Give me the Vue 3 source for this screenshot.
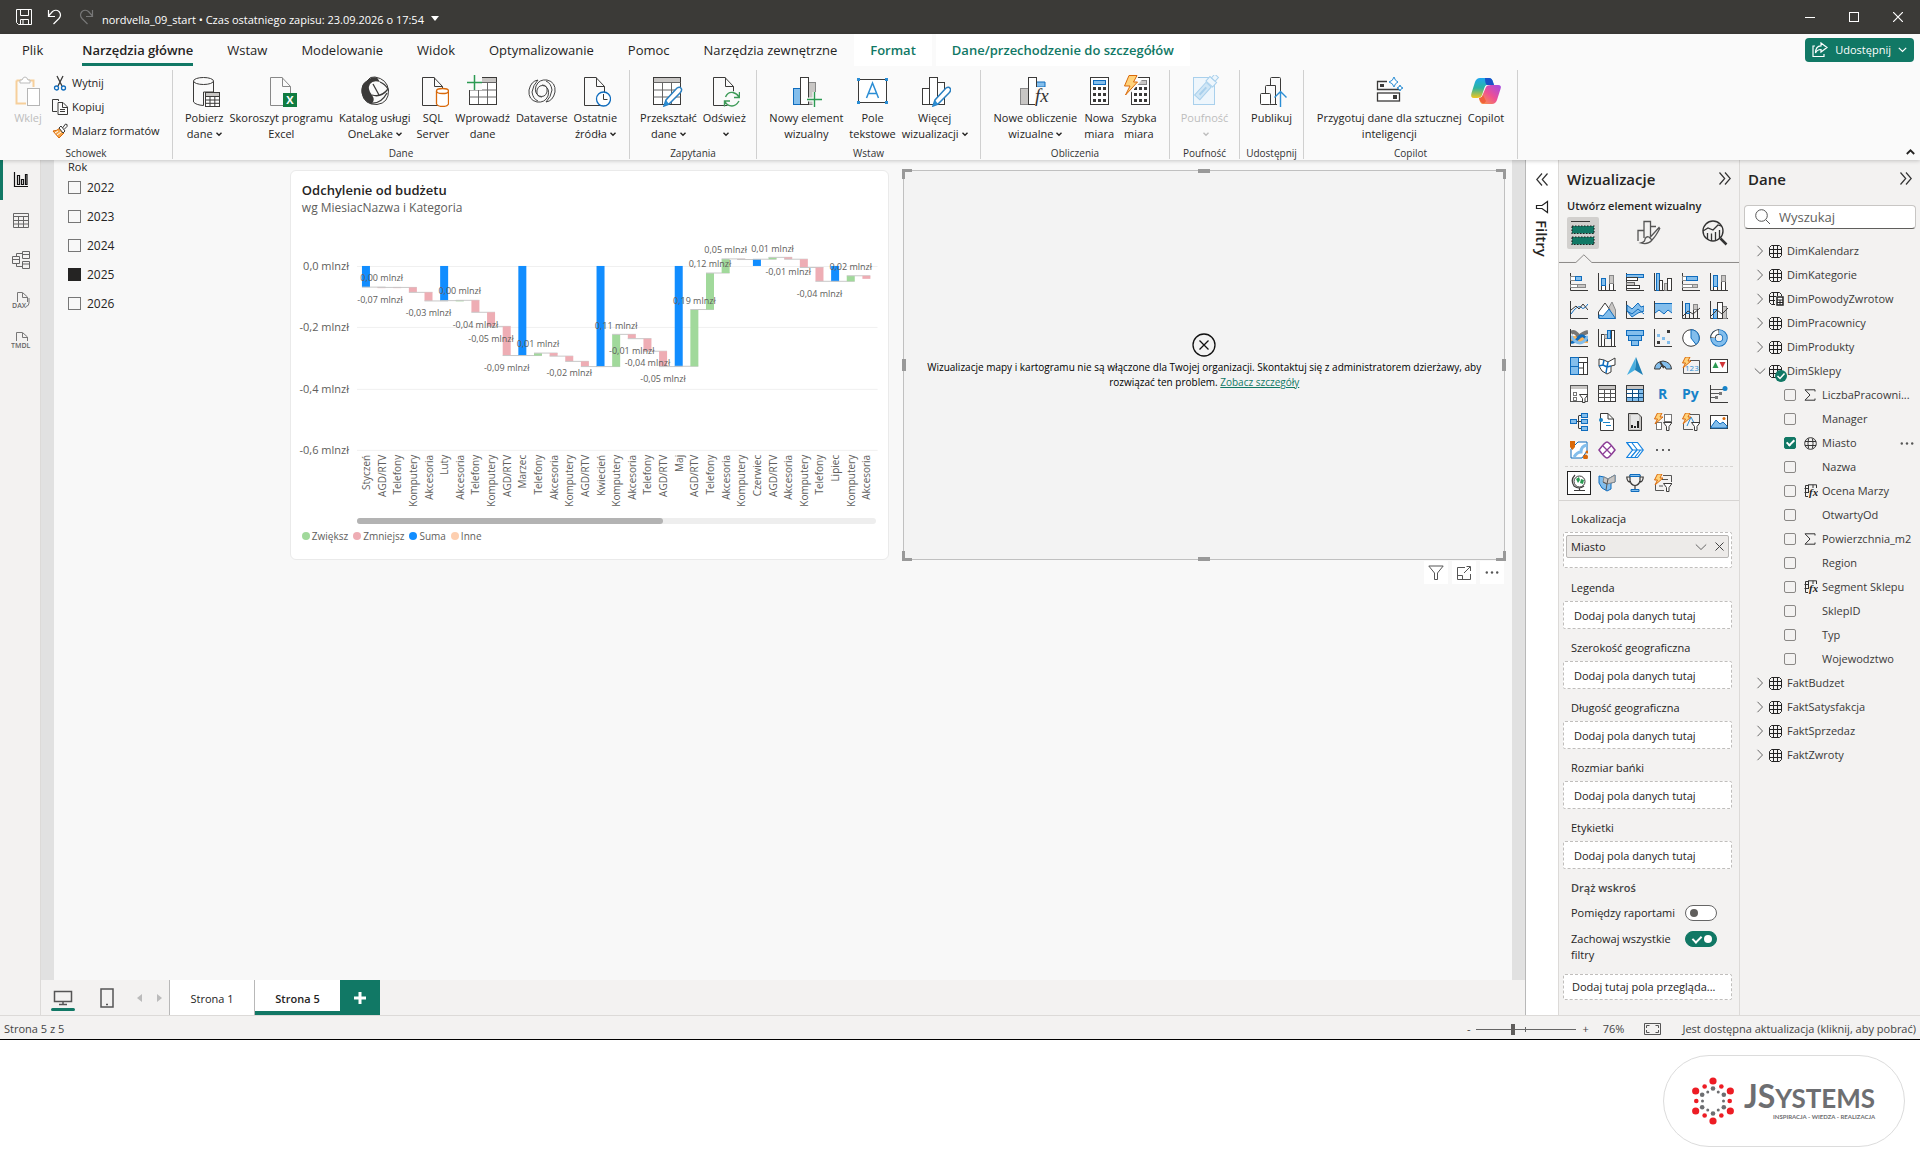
<script setup>
import { h, ref } from 'vue'

const D = '#3b3a39', B = '#0f6cbd', F = '#83beec', G = '#c8c6c4'
const line = (d, c = D, extra = '') => `<path d="${d}" fill="none" stroke="${c}" ${extra}/>`
const box = (x, y, w, hh, f = 'none', c = D, extra = '') => `<rect x="${x}" y="${y}" width="${w}" height="${hh}" fill="${f}" stroke="${c}" ${extra}/>`
const area = (d, f, c = 'none', extra = '') => `<path d="${d}" fill="${f}" stroke="${c}" ${extra}/>`
const axis = line('M.5 0V17.5H18')
const page = (c = D) => area('M5.5 2.5H17L25.5 11.5V30.5H5.5Z', '#fafafa', c) + line('M17.5 2.5V11.5H25.5', c)
const pencil = (x, y) => `<g transform="translate(${x} ${y})">` + area('M1 19L3 13L14 1Q17 -1 18.500 2Q19 4 17 6L6 17Z', '#fff', '#2a7fc0', 'stroke-width="1.500"') + area('M1 19L3 13L6 17Z', '#2a8dd4') + '</g>'
const bolt = area('M3.500 0H8L6 4H9L1 11L3.500 6H.5Z', '#ffd27a', '#d9690a')
const funnel = area('M9.500 9.500H18L15 13.500V17.500H12.500V13.500Z', '#fff', D)

const art = {
  save: [16, 16, line('M.5 .5H15.500V15.500H2.500L.5 13.500ZM4.500 .5V6.500H12.500V.5M4.500 15V10.500H12.500V15M7 11V15', '#fff')],
  undo: [16, 16, line('M1.500 1V7.500H8M1.500 7L5.500 2.500Q9 0 12 2.500Q15 6 12 9.500L6.500 15', '#fff', 'stroke-width="1.200"')],
  redo: [16, 16, line('M14.500 1V7.500H8M14.500 7L10.500 2.500Q7 0 4 2.500Q1 6 4 9.500L9.500 15', '#777', 'stroke-width="1.200"')],
  min: [10, 10, line('M0 5.500H10', '#fff')],
  max: [10, 10, box(.5, .5, 9, 9, 'none', '#fff')],
  close: [10, 10, line('M0 0L10 10M10 0L0 10', '#fff', 'stroke-width="1.200"')],
  share: [16, 16, line('M3 4H1V14.500H12V12M9 1L15 5.500L9 10V7.500Q5 7.500 3.500 11Q3.500 4 9 3.800Z', '#fff', 'stroke-width="1.200"')],
  chev: [9, 6, line('M.8 .8L4.500 4.500L8.200 .8', 'currentColor', 'stroke-width="1.200"')],
  chevUp: [9, 6, line('M.8 5L4.500 1.300L8.200 5', 'currentColor', 'stroke-width="1.800"')],
  chevS: [6, 5, line('M.5 .8L3 3.300L5.500 .8', 'currentColor', 'stroke-width="1.400"')],
  paste: [32, 32, area('M4.500 5.500H21.500V12M14 28.500H4.500V5.500', 'none', '#f6cf9b', 'stroke-width="2"') + area('M8 8V5H10Q11 2 13 2Q15 2 16 5H18V8Z', '#fff', '#bbb') + box(15.500, 13.500, 12, 17, '#fff', '#b5b5b5')],
  cut: [14, 16, line('M4 1L9 11M10 1L5 11', D, 'stroke-width="1.300"') + `<circle cx="3.500" cy="13" r="2" fill="none" stroke="${B}" stroke-width="1.300"/><circle cx="10.500" cy="13" r="2" fill="none" stroke="${B}" stroke-width="1.300"/>`],
  copy: [16, 16, line('M5 12.500H.5V.5H6.500V2M6 3.500H11L15.500 8V15.500H6ZM10.500 4V8.500H15M8 10.500H13M8 12.500H13')],
  brush: [16, 16, area('M8 5L12 10L7 15L1 8Q5 8 8 5Z', '#f5a54a', '#d9690a') + area('M7 5L9 3L13 8L11 10Z', '#fff', D) + line('M10.500 5L13.500 1Q16 1 15 3.500L12 6.500') + line('M3 10L6 8M5 12L9 9', '#fff')],
  getdata: [32, 32, area('M5.500 6V27Q8 30 15.500 30.500V17H25.500V6', '#fafafa', D) + `<ellipse cx="15.500" cy="6" rx="10" ry="3.500" fill="#fafafa" stroke="${D}"/>` + box(17.500, 17.500, 14, 14, '#fff') + area('M18 18H31V21H18Z', G) + line('M17.500 21.500H31.500M17.500 25H31.500M17.500 28.300H31.500M22 21V31M26.800 21V31')],
  excel: [32, 32, page('#888') + '<rect x="18" y="18" width="14" height="14" fill="#107c41"/><text x="25" y="29" font-size="11" font-weight="700" fill="#fff" text-anchor="middle">X</text>'],
  onelake: [32, 32, area('M16 2Q28 4 29.500 15Q30 28 18 29.500Q5 30 3 18Q2 9 8 6Q11 1 16 2Z', '#fafafa', D) + area('M8 6Q12 1 18 2.500L21 7Q14 5 11 9Q8 14 13 20Q17 26 12 29Q3 25 2.500 16Q3 8 8 6Z', D) + line('M14 9L20 20M13 20Q22 23 29 14M12 28Q22 29 28 18M21 7Q26 9 29 14', D, 'stroke-width="1.300"')],
  sql: [32, 32, page() + area('M19.500 16V29Q21 31.500 25.500 31.500Q30 31.500 31.500 29V16', '#fff', '#d9690a', 'stroke-width="1.300"') + '<ellipse cx="25.500" cy="16" rx="6" ry="2.500" fill="#fff" stroke="#d9690a" stroke-width="1.300"/>'],
  enter: [32, 32, box(2.500, 2.500, 27, 27, '#fff') + area('M14 3H29V7H14Z', G) + line('M2.500 7.500H29.500M2.500 15H29.500M2.500 22H29.500M11.500 7V29M20.500 7V29', '#666') + area('M0 0H15V15H0Z', '#fafafa') + line('M7.500 0V15M0 7.500H15', '#2b9a52', 'stroke-width="1.500"')],
  dataverse: [32, 32, line('M16 10Q22 10 21 17Q19 23 13 21Q8 18 10 11Q13 4 21 5Q30 7 29 17Q27 26 20 27Q25 22 26 15Q25 8 20 6M16 22Q10 22 11 15Q13 9 19 11Q24 14 22 21Q19 28 11 27Q2 25 3 15Q5 6 12 5Q7 10 6 17Q7 24 12 26', '#444')],
  recent: [32, 32, page() + `<circle cx="24.500" cy="24" r="7" fill="#fff" stroke="${B}" stroke-width="1.300"/>` + line('M24.500 19V24.500H28.500')],
  transform: [32, 32, box(1.500, 2.500, 27, 27, '#fff') + area('M2 3H28V7H2Z', G) + line('M1.500 7.500H28.500M1.500 15H28.500M1.500 22H28.500M10.500 7V29M19.500 7V29', '#666') + pencil(11, 12)],
  refresh: [32, 32, page() + '<circle cx="24" cy="24" r="8" fill="#fafafa"/>' + line('M17.500 22Q20 16.500 25 17.500Q29 18.500 31 22M31.500 17V22.500H26M31 26Q28 31 24 31Q19 31 17 26.500M16.500 31.500V26H22', '#3e9a58', 'stroke-width="1.400"')],
  visual: [32, 32, box(3.500, 13.500, 8, 16, F, B) + box(17.500, 7.500, 8, 22, G, '#888') + box(10.500, 2.500, 8, 27, '#fff') + line('M24.500 17V32M17 24.500H32', '#fafafa', 'stroke-width="4"') + line('M24.500 17V32M17 24.500H32', '#2b9a52', 'stroke-width="1.400"')],
  textbox: [32, 32, box(2.500, 4.500, 28, 23, '#fff', D) + area('M1 3H4V6H1ZM29 3H32V6H29ZM1 26H4V29H1ZM29 26H32V29H29Z', '#2a8dd4') + line('M10.500 23L16.500 8L22.500 23M12.500 18.500H20.500', '#2a8dd4', 'stroke-width="1.500"')],
  more: [32, 32, box(3.500, 13.500, 8, 16, '#fff') + box(17.500, 7.500, 8, 22, '#fff') + box(10.500, 2.500, 8, 27, '#fff') + pencil(13, 12)],
  calc: [32, 32, box(1.500, 13.500, 8, 16, G, '#888') + area('M17 7H26V12H17Z', F, B) + box(9.500, 2.500, 8, 27, '#fff') + area('M16 12H30V32H16Z', '#fafafa') + '<text x="16" y="27" font-size="19" font-style="italic" font-family="Liberation Serif, serif" fill="#333">fx</text>'],
  measure: [32, 32, box(7.500, 2.500, 18, 27, '#fff') + box(10.500, 5.500, 12, 4, F, B) + line('M10 13.500H24M10 19.500H24M10 25.500H24', D, 'stroke-width="3" stroke-dasharray="3 2"')],
  quick: [32, 32, box(8.500, 2.500, 18, 27, '#fff') + box(14.500, 5.500, 9, 4, G, '#888') + line('M11 13.500H25M11 19.500H25M11 25.500H25', D, 'stroke-width="3" stroke-dasharray="3 2"') + area('M6 0H14L10.500 7H14.500L2.500 21L7 11H1.500Z', '#ffd27a', '#fafafa', 'stroke-width="4"') + area('M6 .5H14L10.500 7H14.500L2.500 20L7 11H1.500Z', '#ffd27a', '#d9690a')],
  sens: [32, 32, box(4.500, 2.500, 21, 27, '#eef6fc', '#a9d0ec') + `<g transform="rotate(42 18 13)">` + box(13.500, 9.500, 7, 17, '#cfe6f6', '#a9d0ec') + box(12.500, 2.500, 9, 6, '#eef6fc', '#a9d0ec') + box(14.500, -2.500, 5, 5, '#eef6fc', '#a9d0ec') + line('M17 13V23', '#a9d0ec', 'stroke-width="2"') + '</g>'],
  publish: [32, 32, box(5.500, 18.500, 10, 11, '#fff', D, 'rx="1"') + line('M10.500 18V11.500Q10.500 10.500 11.500 10.500H20.500V29.500M15.500 10V3.500Q15.500 2.500 16.500 2.500H24.500Q25.500 2.500 25.500 3.500V16M15 29.500H22') + line('M25.500 32V17M19.500 22.500L25.500 16.500L31.500 22.500', '#2a8dd4', 'stroke-width="1.400"')],
  prep: [32, 32, line('M14 6.500H4.500V14.500H26.500V11', D, 'stroke-width="1.300"') + box(4.500, 18, 22, 8, '#fff', D, 'stroke-width="1.300"') + area('M7 9H11V12H7ZM20 20H24V24H20Z', D) + area('M21 2Q22 6 25 7Q22 8 21 12Q20 8 16 7Q20 6 21 2ZM27 10Q27.500 12.500 30 13Q27.500 13.500 27 16Q26.500 13.500 24 13Q26.500 12.500 27 10Z', '#fff', '#2a8dd4')],
  copilot: [32, 32, '<defs><linearGradient id="cpa" x1="0" y1="0" x2="0" y2="1"><stop offset="0" stop-color="#1ea7f0"/><stop offset=".5" stop-color="#2bb5a0"/><stop offset="1" stop-color="#f5c51c"/></linearGradient><linearGradient id="cpb" x1="1" y1="0" x2="0" y2="1"><stop offset="0" stop-color="#a34be8"/><stop offset=".5" stop-color="#ee5094"/><stop offset="1" stop-color="#fba23c"/></linearGradient></defs><path d="M10 3H19Q22 3 23 7L24 10H17Q15 10 14 14L12 20Q11 23 7 23H4Q0 23 1.500 18L5 7Q6.500 3 10 3Z" fill="url(#cpa)"/><path d="M15 3H19Q22 3 23 7L24 10H17Q15 9 15 3Z" fill="#1a52c8"/><path d="M22 29H13Q10 29 9 23Q12 23 13 19L16 12Q17 10 21 10H28Q32 10 30.500 14L27 25Q25.500 29 22 29Z" fill="url(#cpb)"/><path d="M9 23Q12 23 13 20L16 26Q15 29 12 28Q10 27 9 23Z" fill="#f0603c"/>'],
  report: [16, 16, line('M1.500 0V14.500H15M4.500 3.500H6.500V12.500H4.500ZM8.500 7.500H10.500V12.500H8.500ZM12.500 2.500H14V12.500H12.500Z', '#111', 'stroke-width="1.200"')],
  table: [16, 16, line('M.5 1.500H15.500V15.500H.5ZM.5 4.500H15.500M.5 8.500H15.500M.5 12H15.500M5.500 4V15M10.500 4V15', '#666')],
  model: [18, 18, line('M10.500 .5H17.500V7.500H10.500ZM10.500 3.500H17.500M.5 5.500H7.500V12.500H.5ZM.5 8.500H7.500M10.500 10.500H17.500V17.500H10.500ZM10.500 13H17.500M4.500 5V2.500H10M4.500 13V15.500H10', '#666')],
  dax: [18, 18, line('M5.500 11V1.500H10.500L15.500 6V11M10.500 2V6.500H15M17 7V12Q17 15 14 15.500', '#777') + '<text x="0" y="17" font-size="7" font-weight="600" fill="#666">DAX</text>'],
  tmdl: [20, 18, line('M5.500 10V1.500H11.500L16.500 6V10M11.500 2V6.500H16', '#777') + '<text x="0" y="17" font-size="7" font-weight="600" fill="#666">TMDL</text>'],
  left2: [13, 13, line('M6 .5L.8 6.500L6 12.500M11.500 .5L6.300 6.500L11.500 12.500', '#333', 'stroke-width="1.200"')],
  right2: [13, 13, line('M1.500 .5L6.700 6.500L1.500 12.500M7 .5L12.200 6.500L7 12.500', '#333', 'stroke-width="1.200"')],
  filterSide: [14, 14, line('M12.500 1.500V12.500L7 8.500H1.500V5.500H7Z', '#222', 'stroke-width="1.200"')],
  build: [24, 26, line('M0 1.500H19') + `<rect x="1" y="6" width="22" height="7.500" fill="#117865" stroke="#222" stroke-width="1.200" stroke-dasharray="1.500 1.500"/><rect x="1" y="17" width="22" height="7.500" fill="#117865" stroke="#222" stroke-width="1.200" stroke-dasharray="1.500 1.500"/>`],
  format: [24, 26, line('M1 21V10.500H7M7 18V1.500H13.500V16M14 6.500H19M22.500 7L12.500 18M12 17L15 20Q11 25 4 23Q8 22 8 19Q9 16 12 17ZM23 8Q19 16 15 20', '#555', 'stroke-width="1.300"')],
  analyze: [26, 26, `<circle cx="11" cy="11" r="10" fill="none" stroke="#333" stroke-width="1.400"/>` + line('M18.500 18.500L24.500 24.500', '#333', 'stroke-width="2.500"') + line('M1 11L6 8L11 10L16 5L19 6M5.500 19V13M9.500 21V13.500M13.500 20V12M17.500 18V10', '#333', 'stroke-width="1.300"')],
  search: [16, 16, `<circle cx="6.500" cy="6.500" r="5.800" fill="none" stroke="#555"/>` + line('M10.800 10.800L15 15', '#555')],
  next: [8, 12, line('M1.500 .8L6.500 6L1.500 11.200', '#666')],
  down: [12, 8, line('M.8 1.500L6 6.500L11.200 1.500', '#666')],
  tbl: [13, 13, line('M2.500 .5H10.500L12.500 2.500V10.500L10.500 12.500H2.500L.5 10.500V2.500ZM.5 4.500H12.500M.5 8.500H12.500M4.500 .5V12.500M8.500 .5V12.500', '#222')],
  tblCalc: [15, 14, line('M6 12.500H2.500L.5 10.500V2.500L2.500 .5H10.500L12.500 2.500V4M.5 4.500H7M.5 8.500H6M4.500 .5V12.500M8.500 .5V4', '#222') + area('M8 5H14V13H8Z', '#fff', '#222', 'stroke-width="1.500"') + line('M8 8H14M8 10.500H14M11 8V13', '#222')],
  sigma: [12, 12, line('M11 2.500V.8H1L6 6L1 11.200H11V9.500', '#333')],
  globe: [13, 13, line('M6.500 .7A5.800 5.800 0 0 1 6.500 12.300A5.800 5.800 0 0 1 6.500 .7ZM1 4.500H12M1 8.500H12M4.500 1.500Q3.500 6.500 4.500 11.500M8.500 1.500Q9.500 6.500 8.500 11.500', '#333')],
  fx: [14, 14, line('M4 12.500H1.500V1.500H4M.5 4.500H5M.5 8.500H4M4.500 .5V9M4.500 .8H12.500V4M9 .8V4', '#333') + '<text x="5" y="12" font-size="11" font-style="italic" font-weight="700" font-family="Liberation Serif, serif" fill="#222">fx</text>'],
  check: [12, 12, line('M2.500 6L5 8.500L9.500 3.500', '#fff', 'stroke-width="1.500"')],
  desktop: [20, 16, line('M1.500 1.500H18.500V11.500H1.500ZM10 11.500V14.500M6 14.500H14', '#555', 'stroke-width="1.500"')],
  phone: [14, 20, line('M1 1H13V19H1ZM6 16.500H8', '#555', 'stroke-width="1.500"')],
  triL: [5, 8, area('M5 0V8L0 4Z', '#bbb')],
  triR: [5, 8, area('M0 0V8L5 4Z', '#bbb')],
  plus: [12, 12, line('M6 0V12M0 6H12', '#fff', 'stroke-width="3"')],
  fit: [17, 12, line('M.5 .5H16.500V11.500H.5Z', '#555') + line('M5.500 2.500H2.500V5M2.500 7V9.500H5.500M11.500 2.500H14.500V5M14.500 7V9.500H11.500', '#555')],
  error: [24, 24, `<circle cx="12" cy="12" r="11" fill="none" stroke="#111" stroke-width="1.300"/>` + line('M7.500 7.500L16.500 16.500M16.500 7.500L7.500 16.500', '#111', 'stroke-width="1.300"')],
  funnel: [16, 16, line('M.8 1H15.200L9.500 8V14.500H6.500V8Z', '#555')],
  focus: [14, 14, line('M8 1.500H.5V13.500H13.500V8M.5 9.500H5.500V13.500M7 7L13 1M9.500 .5H13.500V5', '#555')],
  dots: [14, 3, '<circle cx="1.800" cy="1.500" r="1.200" fill="#555"/><circle cx="7" cy="1.500" r="1.200" fill="#555"/><circle cx="12.200" cy="1.500" r="1.200" fill="#555"/>'],
  x: [9, 9, line('M.5 .5L8.500 8.500M8.500 .5L.5 8.500', '#444')],

  v0: [18, 18, axis + box(.5, 3.500, 5, 4, '#fff', '#888') + box(5.500, 3.500, 6, 4, F, B) + box(.5, 11.500, 7, 3, '#fff', '#888') + box(7.500, 11.500, 8, 3, G, '#888')],
  v1: [18, 18, axis + box(3.500, 12.500, 4, 5, '#fff') + box(3.500, 5.500, 4, 7, F, B) + box(11.500, 10.500, 4, 7, '#fff') + box(11.500, 2.500, 4, 8, G, '#888')],
  v2: [18, 18, axis + box(.5, 1.500, 17, 3, F, B) + box(.5, 4.500, 11, 3, '#fff') + box(.5, 9.500, 8, 3, G, '#666') + box(.5, 12.500, 13, 3, '#fff')],
  v3: [18, 18, axis + box(2.500, .5, 3, 17, F, B) + box(5.500, 7.500, 3, 10, '#fff') + box(10.500, 10.500, 3, 7, G, '#888') + box(13.500, 5.500, 4, 12, '#fff')],
  v4: [18, 18, axis + box(.5, 3.500, 4, 4, '#fff', '#888') + box(4.500, 3.500, 11, 4, F, B) + box(.5, 11.500, 10, 3, '#fff', '#888') + box(10.500, 11.500, 5, 3, G, '#888')],
  v5: [18, 18, axis + box(3.500, 13.500, 4, 4, '#fff') + box(3.500, 2.500, 4, 11, F, B) + box(11.500, 8.500, 4, 9, '#fff') + box(11.500, 2.500, 4, 6, G, '#888')],
  v6: [18, 18, axis + line('M1 13Q7 4 11 6Q13 10 18 3', B) + line('M1 9L6 5L9 8L13 3L18 9')],
  v7: [18, 18, area('M10 17.500V8L14 1L17.500 9V17.500Z', G, '#888') + area('M.5 17V11L7 2L12 9L5 17Z', '#fff', D) + area('M1 17.500V14L5 15L11 8L17.500 17.500Z', F, B)],
  v8: [18, 18, axis + area('M1 4L6 8L12 2L15 6L18 5V10L12 12L6 16L1 10Z', F, B) + line('M1 10L6 13L12 8L18 13', B)],
  v9: [18, 18, axis + area('M1 2H18V12L14 9L10 13L5 9L1 12Z', F) + line('M1 2.500H18M1 12L5 9L10 13L14 9L18 12', B)],
  v10: [18, 18, axis + box(3.500, 2.500, 4, 10, F, B) + box(11.500, 3.500, 4, 5, G, '#888') + line('M3.500 13V17M7.500 13V17M11.500 9V17M15.500 8V17M1 15L6 10L11 13L18 7')],
  v11: [18, 18, axis + box(3.500, 8.500, 4, 9, F, B) + box(12.500, 5.500, 4, 12, G, '#888') + box(7.500, 1.500, 5, 16, '#fff') + line('M1 15L7 9L12 13L18 7')],
  v12: [18, 18, area('M1 7H18V14H1Z', '#fbb35a') + line('M1 4Q5 1 9 8Q13 4 18 3', '#777', 'stroke-width="4"') + line('M1 13Q5 14 9 8Q13 4 18 12', B, 'stroke-width="3"') + line('M1 7Q5 14 10 14Q14 14 18 7', F, 'stroke-width="3"') + axis],
  v13: [18, 18, axis + box(3.500, 5.500, 3, 12, '#fff') + box(6.500, 5.500, 3, 4, G, '#888') + box(9.500, 1.500, 3, 8, F, B) + box(13.500, 1.500, 3, 16, '#fff')],
  v14: [18, 18, box(.5, 1.500, 17, 5, F, B) + box(2.500, 6.500, 13, 5, F, B) + box(5.500, 11.500, 7, 5, F, B)],
  v15: [18, 18, line('M.5 0V17.500H18') + area('M3 5H6V8H3ZM8 8H11V11H8ZM13 12H16V15H13Z', F) + area('M13 1H16V4H13ZM3 12H6V15H3Z', D)],
  v16: [18, 18, `<circle cx="9" cy="9" r="8.300" fill="#fff" stroke="${D}"/>` + area('M9 .7A8.300 8.300 0 0 1 14 15.500L9 9Z', F, B)],
  v17: [18, 18, `<circle cx="9" cy="9" r="6" fill="none" stroke="${B}" stroke-width="5.500"/><circle cx="9" cy="9" r="6" fill="none" stroke="${F}" stroke-width="3.800"/><path d="M3 9A6 6 0 0 1 9 3" fill="none" stroke="${D}" stroke-width="5.500"/><path d="M3 8.500A6 6 0 0 1 8.500 3" fill="none" stroke="#fff" stroke-width="3.800"/>`],
  v18: [18, 18, box(.5, .5, 17, 17, '#fff') + area('M.5 .5H8.500V17.500H.5Z', F, B) + line('M.5 9.500H8.500', B) + line('M8.500 5.500H17.500M13.500 5V17.500M9 11H13')],
  v19: [18, 18, area('M1 2L6 3L10 5L17 1V8L13 9V15L9 17L4 14L1 9Z', '#fff', D) + line('M6 3L5 8L1 9M5 8L9 10L8 16M9 10L13 9M10 5L9 10', B, 'stroke-width="1.500"')],
  v20: [18, 18, area('M10 0L17 18L9 13Z', '#1d7fb5') + area('M10 0L1 18L9 13Z', '#46aee0')],
  v21: [18, 18, area('M.5 12Q1 5 9 4Q17 5 17.500 12H12Q12 9 9 9Q6 9 6 12Z', F, D) + line('M6 5L10 11', D, 'stroke-width="2"')],
  v22: [18, 18, line('M8 3.500H17.500V16.500H1.500V11', '#555') + '<text x="3" y="14" font-size="8" fill="#2a8dd4">123</text>' + bolt],
  v23: [18, 18, box(.5, 2.500, 17, 13, '#fff') + area('M2.500 11L5.500 5L8.500 11Z', '#2b9a52') + area('M9.500 5H15.500L12.500 11Z', '#d13438')],
  v24: [18, 18, box(.5, .5, 17, 16, '#fff', '#555') + area('M1 1H17V4H1Z', G) + box(3.500, 7.500, 3, 3, '#fff', '#777') + box(3.500, 12.500, 3, 3, '#fff', '#777') + funnel],
  v25: [18, 18, box(.5, .5, 17, 16, '#fff') + area('M1 1H17V4H1Z', G) + line('M.5 4.500H17.500M.5 8.500H17.500M.5 12.500H17.500M6.500 4V16M12.500 4V16', '#555')],
  v26: [18, 18, box(.5, .5, 17, 16, '#fff') + area('M1 1H17V4H1Z', G) + area('M12 5H17V16H1V12H12Z', F) + line('M.5 4.500H17.500M.5 8.500H17.500M.5 12.500H17.500M6.500 4V16M12.500 4V16', '#0f4f86')],
  v27: [18, 18, '<text x="4" y="14" font-size="14" font-weight="700" fill="#1683c9">R</text>'],
  v28: [20, 18, '<text x="1" y="14" font-size="14" font-weight="700" fill="#1683c9">Py</text>'],
  v29: [18, 18, axis + line('M1 4.500H13M1 8.500H9M1 12.500H5', '#555') + `<circle cx="15" cy="3.500" r="2.500" fill="#1683c9"/>` + area('M9 7H12V10H9ZM5 11H8V14H5Z', '#777')],
  v30: [18, 18, line('M6 8.500H11M9 2.500H11M9 15.500H11M8.500 2.500V15.500') + box(.5, 6.500, 6, 4, F, B) + box(11.500, .5, 6, 4, F, B) + box(11.500, 6.500, 6, 4, F, B) + box(11.500, 13.500, 6, 4, F, B)],
  v31: [18, 18, area('M2.500 .5H10L15.500 6V17.500H2.500Z', '#fff', D) + line('M10 .5V6H15.500') + `<circle cx="3" cy="7" r="2" fill="#1683c9"/>` + line('M5 9.500H12M8 12.500H13', '#1683c9')],
  v32: [18, 18, area('M2.500 .5H12L15.500 4V17.500H2.500Z', G, D) + area('M5 2H13V16H5Z', '#e6e6e6') + area('M5 12H7V15H5ZM8 13H10V15H8ZM11 8H13V15H11Z', '#222')],
  v33: [18, 18, box(2.500, 9.500, 5, 7, '#fff', '#777') + box(10.500, 1.500, 7, 7, '#fff', '#777') + funnel + bolt],
  v34: [18, 18, line('M8 1.500H17.500V9M1.500 11V16.500H11', '#555') + line('M5 13L9 4L12 10', '#2a8dd4') + funnel + bolt],
  v35: [18, 18, box(.5, 2.500, 17, 13, '#fff') + area('M1 14L6 7L10 11L13 9L17 13V15H1Z', F, B) + `<circle cx="14" cy="5.500" r="1.500" fill="#d9690a"/>`],
  v36: [18, 18, area('M8 1H17V10L12 17H1V8Z', '#fff', B) + line('M4 16Q7 11 11 11Q11 5 17 4', F, 'stroke-width="3"') + area('M0 0H5V6L2.500 9L0 6Z', '#d9690a') + '<circle cx="15.500" cy="16" r="2.500" fill="#d9690a"/><circle cx="17" cy="11" r="1.500" fill="#d9690a"/>'],
  v37: [18, 18, area('M9 1Q11 1 17 9Q11 17 9 17Q7 17 1 9Q7 1 9 1Z', '#fff', '#8c3d96', 'stroke-width="1.500"') + line('M5 5L13 13M13 5L5 13', '#8c3d96', 'stroke-width="1.300"')],
  v38: [18, 18, area('M.8 1.500H11.500L17.200 9L11.500 16.500H.8L6.500 9Z', '#fff', '#1683e0', 'stroke-width="1.200"') + line('M.8 1.500L6.500 9H17M5 16L11 9M9 16L14.500 9M6 2L11.500 9', '#1683e0', 'stroke-width="1.200"')],
  v39: [18, 18, '<circle cx="3" cy="9" r="1" fill="#333"/><circle cx="9" cy="9" r="1" fill="#333"/><circle cx="15" cy="9" r="1" fill="#333"/>'],
  w0: [18, 18, `<circle cx="9.500" cy="7.500" r="5.500" fill="#fff" stroke="${D}"/>` + area('M6 5L9 3L10 6L8 9ZM11 5L14 6L13 10L10 9Z', '#2b9a52') + line('M5 1Q0 6 4 12Q9 16 14 12M9.500 14V16.500M4 16.500H15', D, 'stroke-width="1.200"')],
  w1: [18, 18, area('M1 2L6 3L10 5L17 1V8L13 9V15L9 17L4 14L1 9Z', F, B) + area('M6 3L10 5L17 1V8L9 10L5 8Z', G, '#888') + line('M5 8L9 10L8 16M10 5L9 10', '#555')],
  w2: [18, 18, line('M4 1V7Q5 11 9 11.500Q13 11 14 7V1M4 3H.8Q.8 8 5 8.500M14 3H17.200Q17.200 8 13 8.500M9 11V15', D, 'stroke-width="1.200"') + area('M4 .5H14V2.500H4ZM5 15.500H13V17.500H5Z', F, B)],
  w3: [18, 18, line('M9 1.500H17.500V8M1.500 11V16.500H10M8 5.500H14M5 12H9', '#555') + funnel + bolt],
}
const Ico = (p) => h('svg', { width: art[p.n][0], height: art[p.n][1], viewBox: `0 0 ${art[p.n][0]} ${art[p.n][1]}`, 'aria-hidden': 'true', innerHTML: art[p.n][2] })
Ico.props = ['n']

const menu = ['Wstaw', 'Modelowanie', 'Widok', 'Optymalizowanie', 'Pomoc', 'Narzędzia zewnętrzne']
const clip = [['cut', 'Wytnij'], ['copy', 'Kopiuj'], ['brush', 'Malarz formatów']]
const groups = [
  { label: 'Dane', cls: 'g-data', items: [['getdata', 'Pobierz', 'dane', 1], ['excel', 'Skoroszyt programu', 'Excel'], ['onelake', 'Katalog usługi', 'OneLake', 1], ['sql', 'SQL', 'Server'], ['enter', 'Wprowadź', 'dane'], ['dataverse', 'Dataverse', ''], ['recent', 'Ostatnie', 'źródła', 1]] },
  { label: 'Zapytania', cls: 'g-query', items: [['transform', 'Przekształć', 'dane', 1], ['refresh', 'Odśwież', '', 1]] },
  { label: 'Wstaw', cls: 'g-insert', items: [['visual', 'Nowy element', 'wizualny'], ['textbox', 'Pole', 'tekstowe'], ['more', 'Więcej', 'wizualizacji', 1]] },
  { label: 'Obliczenia', cls: 'g-calc', items: [['calc', 'Nowe obliczenie', 'wizualne', 1], ['measure', 'Nowa', 'miara'], ['quick', 'Szybka', 'miara']] },
  { label: 'Poufność', cls: 'g-sens', items: [['sens', 'Poufność', '', 1, 1]] },
  { label: 'Udostępnij', cls: 'g-share', items: [['publish', 'Publikuj', '']] },
  { label: 'Copilot', cls: 'g-copilot', items: [['prep', 'Przygotuj dane dla sztucznej', 'inteligencji'], ['copilot', 'Copilot', '']] },
]
const rail = [['report', 'Widok raportu'], ['table', 'Widok tabeli'], ['model', 'Widok modelu'], ['dax', 'Widok zapytań DAX'], ['tmdl', 'Widok TMDL']]
const years = ref([['2022', false], ['2023', false], ['2024', false], ['2025', true], ['2026', false]])

const S = 's', U = 'u', N = 'd'
const rows = [
  ['Styczeń', S, 0, -0.069], ['AGD/RTV', N, -0.069, -0.07], ['Telefony', N, -0.069, -0.07], ['Komputery', N, -0.07, -0.086], ['Akcesoria', N, -0.086, -0.114],
  ['Luty', S, 0, -0.113], ['Akcesoria', U, -0.113, -0.112], ['Telefony', N, -0.112, -0.151], ['Komputery', N, -0.151, -0.197], ['AGD/RTV', N, -0.197, -0.292],
  ['Marzec', S, 0, -0.292], ['Telefony', U, -0.292, -0.284], ['Akcesoria', N, -0.284, -0.294], ['Komputery', N, -0.294, -0.311], ['AGD/RTV', N, -0.311, -0.328],
  ['Kwiecień', S, 0, -0.328], ['Komputery', U, -0.328, -0.223], ['Akcesoria', N, -0.223, -0.237], ['Telefony', N, -0.237, -0.278], ['AGD/RTV', N, -0.278, -0.328],
  ['Maj', S, 0, -0.327], ['AGD/RTV', U, -0.327, -0.142], ['Telefony', U, -0.142, -0.023], ['Akcesoria', U, -0.023, 0.023], ['Komputery', N, 0.023, 0.021],
  ['Czerwiec', S, 0, 0.022], ['AGD/RTV', U, 0.022, 0.028], ['Akcesoria', N, 0.028, 0.022], ['Komputery', N, 0.022, -0.005], ['Telefony', N, -0.005, -0.05],
  ['Lipiec', S, 0, -0.05], ['Komputery', U, -0.05, -0.032], ['Akcesoria', N, -0.032, -0.042],
]
const colors = { s: '#118dff', u: '#a1d99b', d: '#eeadb4' }
const cx = (i) => 75 + i * 15.65
const vy = (v) => 55 - v * 307
const bars = rows.map(([name, k, a, b], i) => ({
  name, fill: colors[k], x: cx(i) - 4, cx: cx(i), y: vy(Math.max(a, b)), h: Math.max(1, Math.abs(a - b) * 307), end: vy(b), last: i === rows.length - 1,
}))
const marks = [[1, 67, '0,00'], [0.9, 89, '-0,07'], [4, 102, '-0,03'], [6, 80, '0,00'], [7, 114, '-0,04'], [8, 128, '-0,05'], [9, 157, '-0,09'], [11, 133, '0,01'], [13, 162, '-0,02'], [16, 115, '0,11'], [17, 140, '-0,01'], [18, 152, '-0,04'], [19, 168, '-0,05'], [21, 90, '0,19'], [22, 53, '0,12'], [23, 39, '0,05'], [26, 38, '0,01'], [27, 61, '-0,01'], [29, 83, '-0,04'], [31, 56, '0,02']]
const ticks = [[55, '0,0'], [116, '-0,2'], [178, '-0,4'], [239, '-0,6']]
const legend = [['Zwiększ', 'up'], ['Zmniejsz', 'dn'], ['Suma', 'sum'], ['Inne', 'oth']]

const vizIcons = Array.from({ length: 40 }, (_, i) => 'v' + i)
const wells = ['Legenda', 'Szerokość geograficzna', 'Długość geograficzna', 'Rozmiar bańki', 'Etykietki']
const tablesTop = ['DimKalendarz', 'DimKategorie', 'DimPowodyZwrotow', 'DimPracownicy', 'DimProdukty']
const tablesEnd = ['FaktBudzet', 'FaktSatysfakcja', 'FaktSprzedaz', 'FaktZwroty']
const fields = ref([
  { n: 'LiczbaPracowni...', i: 'sigma' }, { n: 'Manager' }, { n: 'Miasto', i: 'globe', on: true, more: true }, { n: 'Nazwa' }, { n: 'Ocena Marzy', i: 'fx' }, { n: 'OtwartyOd' },
  { n: 'Powierzchnia_m2', i: 'sigma' }, { n: 'Region' }, { n: 'Segment Sklepu', i: 'fx' }, { n: 'SklepID' }, { n: 'Typ' }, { n: 'Wojewodztwo' },
])
const across = ref(false)
const keep = ref(true)
const zoom = ref(36)
const ring = (start) => Array.from({ length: 6 }, (_, i) => { const a = (i * 60 + start) * Math.PI / 180; return [Math.cos(a), Math.sin(a)] })
const dotsOuter = ring(-90)
const dotsMid = ring(-60)
</script>

<template>
  <div class="shell">
    <header class="titlebar">
      <button class="tb" aria-label="Zapisz"><Ico n="save" /></button>
      <button class="tb" aria-label="Cofnij"><Ico n="undo" /></button>
      <button class="tb" aria-label="Ponów"><Ico n="redo" /></button>
      <button class="doc">nordvella_09_start • Czas ostatniego zapisu: 23.09.2026 o 17:54<i class="caret"></i></button>
      <div class="win">
        <button aria-label="Minimalizuj"><Ico n="min" /></button>
        <button aria-label="Maksymalizuj"><Ico n="max" /></button>
        <button aria-label="Zamknij"><Ico n="close" /></button>
      </div>
    </header>

    <div class="ribbon">
      <nav class="menu">
        <button class="file">Plik</button>
        <button class="home"><span>Narzędzia główne</span></button>
        <button v-for="m in menu" :key="m">{{ m }}</button>
        <button class="ctx">Format</button>
        <button class="ctx">Dane/przechodzenie do szczegółów</button>
        <button class="share"><Ico n="share" />Udostępnij<Ico n="chev" /></button>
      </nav>
      <div class="groups">
        <section class="group g-clip">
          <div class="items">
            <button class="big off"><Ico n="paste" /><span>Wklej</span></button>
            <div class="small">
              <button v-for="c in clip" :key="c[1]"><span class="si"><Ico :n="c[0]" /></span>{{ c[1] }}</button>
            </div>
          </div>
          <div class="glabel">Schowek</div>
        </section>
        <section v-for="g in groups" :key="g.label" class="group" :class="g.cls">
          <div class="items">
            <button v-for="t in g.items" :key="t[0]" class="big" :class="{ off: t[4] }">
              <Ico :n="t[0]" /><span>{{ t[1] }}</span><span>{{ t[2] }}<Ico v-if="t[3]" n="chevS" class="cs" /></span>
            </button>
          </div>
          <div class="glabel">{{ g.label }}</div>
        </section>
        <button class="collapse" aria-label="Zwiń wstążkę"><Ico n="chevUp" /></button>
      </div>
    </div>

    <main class="work">
      <nav class="rail">
        <button v-for="(r, i) in rail" :key="r[0]" :class="{ on: i === 0 }" :aria-label="r[1]"><Ico :n="r[0]" /></button>
      </nav>

      <div class="center">
        <div class="stage">
          <div class="canvas">
            <fieldset class="slicer">
              <legend>Rok</legend>
              <label v-for="y in years" :key="y[0]"><input v-model="y[1]" type="checkbox">{{ y[0] }}</label>
            </fieldset>

            <section class="card">
              <h2>Odchylenie od budżetu</h2>
              <p>wg MiesiacNazwa i Kategoria</p>
              <svg class="plot" viewBox="0 0 598 306">
                <g class="tick">
                  <template v-for="t in ticks" :key="t[1]">
                    <path :d="`M66 ${t[0] + .5}H587`" stroke="#f0f0f0" />
                    <text x="58" :y="t[0] + 4" text-anchor="end">{{ t[1] }} mlnzł</text>
                  </template>
                </g>
                <g v-for="(b, i) in bars" :key="i">
                  <rect :x="b.x" :y="b.y" width="8" :height="b.h" :fill="b.fill" />
                  <path v-if="!b.last" :d="`M${b.x} ${b.end}h23.600`" stroke="#c8c8c8" />
                  <text class="cat" text-anchor="end" :transform="`translate(${b.cx + 4} 244) rotate(-90)`">{{ b.name }}</text>
                </g>
                <text v-for="(m, i) in marks" :key="i" class="mark" :x="cx(m[0])" :y="m[1] + 3" text-anchor="middle">{{ m[2] }} mlnzł</text>
              </svg>
              <div class="hbar"><i></i></div>
              <ul class="legend"><li v-for="l in legend" :key="l[0]"><i :class="l[1]"></i>{{ l[0] }}</li></ul>
            </section>

            <div class="mapcol">
              <section class="map">
                <i v-for="c in ['tl', 'tr', 'bl', 'br', 'tm', 'bm', 'lm', 'rm']" :key="c" class="hd" :class="c"></i>
                <Ico n="error" />
                <p>Wizualizacje mapy i kartogramu nie są włączone dla Twojej organizacji. Skontaktuj się z administratorem dzierżawy, aby rozwiązać ten problem. <a href="#">Zobacz szczegóły</a></p>
              </section>
              <div class="tools">
                <button aria-label="Filtry"><Ico n="funnel" /></button>
                <button aria-label="Tryb koncentracji"><Ico n="focus" /></button>
                <button aria-label="Więcej opcji"><Ico n="dots" /></button>
              </div>
            </div>
          </div>
        </div>
        <div class="pages">
          <button class="dev on" aria-label="Układ pulpitu"><Ico n="desktop" /></button>
          <button class="dev" aria-label="Układ mobilny"><Ico n="phone" /></button>
          <button class="arr" aria-label="Poprzednia"><Ico n="triL" /></button>
          <button class="arr" aria-label="Następna"><Ico n="triR" /></button>
          <button class="pg">Strona 1</button>
          <button class="pg cur">Strona 5</button>
          <button class="add" aria-label="Nowa strona"><Ico n="plus" /></button>
        </div>
      </div>

      <aside class="filters">
        <button aria-label="Rozwiń"><Ico n="left2" /></button>
        <Ico n="filterSide" />
        <h2>Filtry</h2>
      </aside>

      <aside class="viz">
        <header><h2>Wizualizacje</h2><button aria-label="Zwiń"><Ico n="right2" /></button></header>
        <h3>Utwórz element wizualny</h3>
        <div class="modes">
          <button class="on" aria-label="Kompiluj"><Ico n="build" /></button>
          <button aria-label="Formatuj"><Ico n="format" /></button>
          <button aria-label="Analiza"><Ico n="analyze" /></button>
        </div>
        <svg class="notch" width="181" height="9" viewBox="0 0 181 9"><path d="M0 8.500H17L25 .8L33 8.500H181" fill="none" stroke="#8a8886" /></svg>
        <div class="grid">
          <button v-for="v in vizIcons" :key="v" :aria-label="'Element ' + v"><Ico :n="v" /></button>
        </div>
        <div class="grid extra">
          <button v-for="v in ['w0', 'w1', 'w2', 'w3']" :key="v" :class="{ sel: v === 'w0' }" :aria-label="'Element ' + v"><Ico :n="v" /></button>
        </div>
        <div class="wells">
          <h4>Lokalizacja</h4>
          <div class="well loc"><div class="chip">Miasto<button aria-label="Menu"><Ico n="down" /></button><button aria-label="Usuń"><Ico n="x" /></button></div></div>
          <template v-for="w in wells" :key="w"><h4>{{ w }}</h4><div class="well">Dodaj pola danych tutaj</div></template>
          <h4 class="strong">Drąż wskroś</h4>
          <label class="sw"><span>Pomiędzy raportami</span><input v-model="across" type="checkbox"></label>
          <label class="sw two"><span>Zachowaj wszystkie filtry</span><input v-model="keep" type="checkbox"></label>
          <div class="well last">Dodaj tutaj pola przegląda...</div>
        </div>
      </aside>

      <aside class="data">
        <header><h2>Dane</h2><button aria-label="Zwiń"><Ico n="right2" /></button></header>
        <label class="search"><Ico n="search" /><input type="text" placeholder="Wyszukaj" aria-label="Wyszukaj"></label>
        <ul>
          <li v-for="t in tablesTop" :key="t"><span class="ar"><Ico n="next" /></span><span class="ti"><Ico :n="t === 'DimPowodyZwrotow' ? 'tblCalc' : 'tbl'" /></span>{{ t }}</li>
          <li><span class="ar"><Ico n="down" /></span><span class="ti"><Ico n="tbl" /><b class="badge"><Ico n="check" /></b></span>DimSklepy</li>
          <li v-for="f in fields" :key="f.n" class="field">
            <label><input v-model="f.on" type="checkbox"><span class="fi"><Ico v-if="f.i" :n="f.i" /></span>{{ f.n }}</label>
            <button v-if="f.more" aria-label="Więcej opcji"><Ico n="dots" /></button>
          </li>
          <li v-for="t in tablesEnd" :key="t"><span class="ar"><Ico n="next" /></span><span class="ti"><Ico n="tbl" /></span>{{ t }}</li>
        </ul>
      </aside>
    </main>

    <footer class="status">
      <span>Strona 5 z 5</span>
      <div class="zoom">
        <button aria-label="Pomniejsz">-</button>
        <input v-model="zoom" type="range" min="0" max="100" aria-label="Powiększenie">
        <button aria-label="Powiększ">+</button>
      </div>
      <span class="pct">76%</span>
      <button class="fit" aria-label="Dopasuj do strony"><Ico n="fit" /></button>
      <a href="#">Jest dostępna aktualizacja (kliknij, aby pobrać)</a>
    </footer>

    <div class="brandrow">
      <div class="brand">
        <svg width="46" height="50" viewBox="-23 -25 46 50" aria-hidden="true">
          <template v-for="(d, i) in dotsOuter" :key="i">
            <circle :cx="d[0] * 20" :cy="d[1] * 20" r="3.600" fill="#ed1c24" />
            <circle :cx="d[0] * 12.500" :cy="d[1] * 12.500" r="2.300" fill="#6d6e71" />
          </template>
          <template v-for="(d, i) in dotsMid" :key="i">
            <circle :cx="d[0] * 16.700" :cy="d[1] * 16.700" r="2.300" fill="#ed1c24" />
            <circle :cx="d[0] * 10.500" :cy="d[1] * 10.500" r="1.500" fill="#6d6e71" />
          </template>
        </svg>
        <div class="word"><strong><b>JS</b>YSTEMS</strong><small>INSPIRACJA - WIEDZA - REALIZACJA</small></div>
      </div>
    </div>
  </div>
</template>

<style>
body { margin: 0; background: #fff; }
</style>

<style scoped>
.shell { display: flex; flex-direction: column; min-height: 100vh; font: 12px/16px "Open Sans", "Noto Sans", sans-serif; color: #252423; }
.shell * { box-sizing: border-box; }
button { font: inherit; color: inherit; background: none; border: 0; padding: 0; margin: 0; }
svg { display: block; flex: none; }
h2, h3, h4, p, ul { margin: 0; padding: 0; font-weight: 400; list-style: none; }
a { color: inherit; text-decoration: none; }

.titlebar { display: flex; align-items: center; height: 34px; background: #3b3a37; color: #fff; padding-left: 16px; }
.tb { width: 31px; height: 34px; }
.doc { display: flex; align-items: center; gap: 7px; margin-top: 6px; margin-left: -7px; font-size: 11px; }
.caret { border: 4px solid transparent; border-top: 5px solid #fff; }
.win { display: flex; margin-left: auto; }
.win button { width: 44px; display: grid; place-items: center; }

.ribbon { background: #fafafa; box-shadow: 0 1px 4px #0003; position: relative; z-index: 2; }
.menu { display: flex; height: 32px; align-items: stretch; font-size: 13px; }
.menu button { padding: 0 17px; }
.menu .file { padding: 0 22px; }
.menu .home { font-weight: 600; }
.menu .home span { display: flex; align-items: center; height: 32px; box-shadow: inset 0 -3px #117865; }
.menu .ctx { background: #fff; color: #117865; font-weight: 600; padding: 0 16px; }
.menu .ctx + .ctx { margin-left: 4px; }
.menu .share { display: flex; align-items: center; gap: 7px; height: 24px; margin: 4px 6px 0 auto; padding: 0 7px; background: #117865; color: #fff; border-radius: 4px; font-size: 11px; }
.groups { display: flex; height: 94px; padding: 4px 0 1px; }
.group { display: flex; flex-direction: column; border-right: 1px solid #d0d0d0; flex: none; }
.items { display: flex; justify-content: center; gap: 6px; flex: 1; }
.big { display: flex; flex-direction: column; align-items: center; padding-top: 5px; font-size: 11px; line-height: 16px; white-space: nowrap; }
.big svg { margin-bottom: 3px; }
.big .cs { display: inline-block; margin: 0 0 1px 3px; }
.big span { min-height: 16px; }
.off { color: #bdbdbd; }
.glabel { text-align: center; font-size: 10px; line-height: 12px; color: #333; }
.g-clip { width: 173px; }
.g-clip .items { justify-content: flex-start; padding-left: 12px; gap: 8px; }
.small { display: flex; flex-direction: column; padding-top: 1px; font-size: 11px; }
.small button { display: flex; align-items: center; gap: 4px; height: 24px; }
.si { width: 16px; display: grid; place-items: center; }
.g-data { width: 457px; }
.g-query { width: 127px; }
.g-insert { width: 224px; }
.g-calc { width: 189px; }
.g-sens { width: 70px; }
.g-share { width: 64px; }
.g-copilot { width: 214px; }
.collapse { margin: auto 5px 4px auto; }

.work { display: flex; flex: none; background: #f3f2f1; }
.rail { width: 41px; border-right: 1px solid #dcdad8; display: flex; flex-direction: column; }
.rail button { height: 40px; display: grid; place-items: center; border-left: 3px solid transparent; padding-right: 2px; }
.rail .on { border-color: #117865; }
.center { flex: 1; min-width: 0; display: flex; flex-direction: column; }
.stage { flex: 1; display: flex; background: #e1e1e1; padding: 0 13px; }
.canvas { flex: 1; background: #f8f8f8; display: grid; grid-template-columns: 222fr 600fr 602fr; column-gap: 14px; align-items: start; padding-right: 7px; }
.slicer { border: 0; margin: 0; padding: 0 0 0 14px; font-size: 12px; }
.slicer legend { font-size: 11px; line-height: 13px; padding: 0; }
.slicer label { display: flex; align-items: center; gap: 6px; height: 29px; }
.slicer input { appearance: none; width: 13px; height: 13px; margin: 0; border: 1px solid #777; }
.slicer input:checked { background: #252423; border-color: #252423; }
.card { margin-top: 10px; background: #fff; border: 1px solid #eaeaea; border-radius: 6px; height: 390px; padding-top: 10px; }
.card h2 { font-size: 13px; line-height: 18px; font-weight: 600; padding-left: 11px; }
.card p { font-size: 12px; line-height: 18px; padding-left: 11px; color: #605e5c; }
.plot { width: 100%; height: auto; margin-top: -6px; }
.tick text { font-size: 11px; fill: #605e5c; }
.cat { font-size: 10px; fill: #605e5c; }
.mark { font-size: 9px; fill: #605e5c; }
.hbar { height: 6px; margin: 1px 12px 0 66px; background: #eee; border-radius: 3px; }
.hbar i { display: block; width: 59%; height: 6px; background: #b3b3b3; border-radius: 3px; }
.legend { display: flex; gap: 5px; padding: 4px 11px 0; font-size: 10px; color: #605e5c; }
.legend li { display: flex; align-items: center; gap: 2px; }
.legend i { width: 8px; height: 8px; border-radius: 50%; }
.up { background: #a1d99b; }
.dn { background: #eeadb4; }
.sum { background: #118dff; }
.oth { background: #fdcfb0; }
.mapcol { margin-top: 10px; }
.map { position: relative; height: 390px; border: 1px solid #c0c0c0; background: #f3f3f3; display: flex; flex-direction: column; align-items: center; padding: 162px 10px 0; color: #000; }
.map p { font-size: 10px; line-height: 15px; text-align: center; margin-top: 3px; max-width: 564px; }
.map a { color: #117865; text-decoration: underline; }
.hd { position: absolute; border: 0 solid #999; }
.tl { left: -2px; top: -2px; width: 10px; height: 10px; border-width: 3px 0 0 3px; }
.tr { right: -2px; top: -2px; width: 10px; height: 10px; border-width: 3px 3px 0 0; }
.bl { left: -2px; bottom: -2px; width: 10px; height: 10px; border-width: 0 0 3px 3px; }
.br { right: -2px; bottom: -2px; width: 10px; height: 10px; border-width: 0 3px 3px 0; }
.tm, .bm { left: calc(50% - 6px); width: 12px; border-top-width: 4px; }
.tm { top: -2px; }
.bm { bottom: -2px; }
.lm, .rm { top: calc(50% - 6px); height: 12px; border-left-width: 4px; }
.lm { left: -2px; }
.rm { right: -2px; }
.tools { display: flex; justify-content: flex-end; gap: 4px; margin: 1px 1px 0 0; }
.tools button { width: 24px; height: 23px; background: #fff; display: grid; place-items: center; }
.pages { display: flex; height: 35px; align-items: stretch; }
.dev { width: 44px; display: flex; flex-direction: column; align-items: center; justify-content: center; position: relative; }
.dev.on::after { content: ""; position: absolute; bottom: 4px; width: 24px; height: 3px; background: #117865; border-radius: 2px; }
.arr { width: 20px; display: grid; place-items: center; }
.pg { width: 85px; background: #fff; border-left: 1px solid #b8b8b8; font-size: 11px; padding-top: 3px; }
.cur { width: 86px; font-weight: 600; box-shadow: inset 0 -4px #117865; }
.add { width: 40px; background: #117865; display: grid; place-items: center; }

.filters { width: 33px; background: #fff; border-left: 1px solid #b8b8b8; display: flex; flex-direction: column; align-items: center; padding-top: 13px; gap: 14px; }
.filters h2 { writing-mode: vertical-rl; font-size: 15px; line-height: 20px; font-weight: 600; margin-top: -8px; }
.viz { width: 181px; border-left: 1px solid #dcdad8; padding-bottom: 15px; }
.viz header, .data header { display: flex; align-items: center; justify-content: space-between; height: 37px; padding: 0 8px; }
.viz header h2, .data header h2 { font-size: 15px; font-weight: 600; }
.viz h3 { font-size: 11px; font-weight: 600; line-height: 18px; padding-left: 8px; }
.modes { display: flex; justify-content: space-between; padding: 2px 8px 5px; }
.modes button { width: 32px; height: 32px; display: grid; place-items: center; }
.modes .on { background: #d2d0ce; border-radius: 2px; }
.notch { max-width: 100%; }
.grid { display: grid; grid-template-columns: repeat(6, 28px); grid-auto-rows: 28px; margin: 5px 0 0 6px; padding-bottom: 2px; width: 168px; border-bottom: 1px dashed #d6d4d2; }
.grid button { display: grid; place-items: center; }
.extra { margin: 0; padding: 2px 0 3px 6px; width: auto; border-bottom: 1px solid #d6d4d2; }
.extra .sel { border: 1px solid #222; width: 24px; height: 24px; margin: 2px; background: #fff; }
.wells { padding: 0 7px 0 4px; font-size: 11px; }
.wells h4 { font-size: 11px; line-height: 20px; padding: 9px 0 3px 8px; }
.wells h4:first-child { padding-top: 8px; }
.well { border: 1px dashed #c0bebc; border-radius: 2px; background: #fff; height: 28px; line-height: 27px; padding-left: 10px; white-space: nowrap; }
.loc { height: 36px; padding: 2px; margin-bottom: 1px; }
.chip { display: flex; align-items: center; gap: 8px; height: 23px; line-height: 20px; background: #edebe9; border: 1px solid #b8b6b4; border-radius: 2px; padding: 0 4px; }
.chip button:first-of-type { margin-left: auto; }
.wells .strong { font-weight: 600; color: #444; }
.sw { display: flex; justify-content: space-between; padding: 0 15px 0 8px; line-height: 16px; margin-top: 4px; }
.sw span { width: 112px; white-space: nowrap; }
.sw.two { margin-top: 10px; }
.sw.two span { width: 106px; white-space: normal; }
.sw input { appearance: none; position: relative; width: 32px; height: 16px; margin: 0 0 0 -16px; border: 1px solid #666; border-radius: 8px; background: #fff; }
.sw input::after { content: ""; position: absolute; top: 3px; left: 4px; width: 8px; height: 8px; border-radius: 50%; background: #605e5c; }
.sw input:checked { background: #117865; border-color: #117865; }
.sw input:checked::after { left: 18px; background: #fff; }
.sw input:checked::before { content: ""; position: absolute; left: 8px; top: 2px; width: 4px; height: 7px; border: solid #fff; border-width: 0 2px 2px 0; transform: rotate(45deg); }
.well.last { margin-top: 11px; height: 26px; line-height: 24px; padding-left: 8px; }

.data { width: 181px; border-left: 1px solid #dcdad8; }
.search { display: flex; align-items: center; gap: 8px; height: 24px; margin: 8px 4px 10px 4px; padding: 0 10px; background: #fff; border: 1px solid #c8c6c4; border-bottom-color: #605e5c; border-radius: 4px; }
.search input { flex: 1; min-width: 0; border: 0; outline: 0; padding: 0; background: none; font: 13px/18px "Open Sans", sans-serif; }
.search input::placeholder { color: #605e5c; }
.data li { display: flex; align-items: center; height: 24px; padding-left: 10px; font-size: 11px; color: #3b3a39; white-space: nowrap; }
.ar { width: 19px; display: grid; justify-items: center; }
.ti { position: relative; width: 18px; }
.badge { position: absolute; left: 6px; top: 5px; width: 12px; height: 12px; border-radius: 50%; background: #117865; }
.data .field { padding-left: 44px; }
.field label { display: flex; align-items: center; }
.field input { appearance: none; width: 12px; height: 12px; margin: 0 8px 0 0; border: 1px solid #8a8886; border-radius: 2px; }
.field input:checked { background: #117865; border-color: #117865; }
.field input:checked::after { content: ""; display: block; width: 3px; height: 6px; margin: 0 0 0 3px; border: solid #fff; border-width: 0 2px 2px 0; transform: rotate(45deg); }
.fi { width: 18px; }
.field button { margin: 0 6px 0 auto; }

.status { display: flex; align-items: center; height: 25px; padding: 3px 4px 0; background: #f3f2f1; border-top: 1px solid #dcdad8; border-bottom: 1px solid #000; color: #444; font-size: 11px; }
.zoom { display: flex; align-items: center; gap: 6px; margin-left: auto; }
.zoom input { appearance: none; width: 100px; height: 12px; margin: 0; background: linear-gradient(#666, #666) center / 100% 1px no-repeat, linear-gradient(#666, #666) 49% 50% / 1px 5px no-repeat; }
.zoom input::-webkit-slider-thumb { appearance: none; width: 4px; height: 11px; background: #605e5c; }
.pct { margin: 0 20px 0 14px; }
.fit { margin-right: 21px; }

.brandrow { display: flex; justify-content: flex-end; padding: 15px; }
.brand { display: flex; align-items: center; width: 242px; height: 92px; border: 1px solid #dcdcdc; border-radius: 46px; padding-left: 26px; gap: 8px; }
.word { display: flex; flex-direction: column; align-items: flex-end; font-family: Lato, sans-serif; color: #6d6e71; }
.word strong { font-size: 26px; line-height: 30px; font-weight: 700; }
.word b { font-size: 32px; font-weight: 700; }
.word small { font-size: 6px; line-height: 8px; font-weight: 700; }
</style>
